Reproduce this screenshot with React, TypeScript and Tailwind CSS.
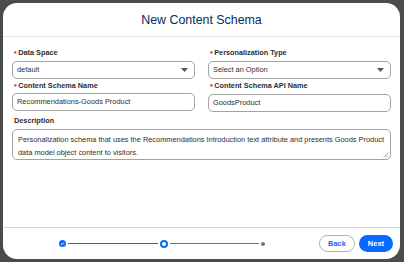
import React from "react";

const font = { fontFamily: '"Liberation Sans", Arial, sans-serif' };

const Label = ({ text, required }: { text: string; required?: boolean }) => (
  <div className="flex items-center h-[10px] pl-[2px] text-[7.3px] font-bold text-[#2e2e2e] leading-none">
    {required && <span className="text-[#ea001e] mr-[1.5px] text-[7px]">*</span>}
    <span>{text}</span>
  </div>
);

const Select = ({ value }: { value: string }) => (
  <div className="flex items-center justify-between h-[18px] rounded-[5px] border border-[#a3a3a3] bg-white pl-[4px] pr-[6px]">
    <span className="text-[7.4px] text-[#2e2e2e]">{value}</span>
    <svg width="7" height="4" viewBox="0 0 7 4">
      <path d="M0 0h7L3.5 4z" fill="#555" />
    </svg>
  </div>
);

const Input = ({ value }: { value: string }) => (
  <div className="flex items-center h-[18px] rounded-[5px] border border-[#a3a3a3] bg-white pl-[4px]">
    <span className="text-[7.4px] text-[#2e2e2e]">{value}</span>
  </div>
);

export default function App() {
  return (
    <div className="w-[404px] h-[262px] bg-[#4b4b4b] p-[3px] pr-[4px]" style={font}>
      <div className="flex flex-col h-[256px] bg-white rounded-[14px] overflow-hidden">
        <div className="flex items-center justify-center h-[34px] border-b-[1.5px] border-[#e5e5e5] shrink-0">
          <h1 className="text-[12.4px] text-[#032d60] leading-none mt-[1px]">New Content Schema</h1>
        </div>

        <div className="flex-1 px-[9px] pt-[11px]">
          <div className="grid grid-cols-2 gap-x-[13px]">
            <div className="flex flex-col">
              <Label text="Data Space" required />
              <div className="mt-[3px]">
                <Select value="default" />
              </div>
              <div className="mt-[2px]">
                <Label text="Content Schema Name" required />
              </div>
              <div className="mt-[2px]">
                <Input value="Recommendations-Goods Product" />
              </div>
            </div>
            <div className="flex flex-col">
              <Label text="Personalization Type" required />
              <div className="mt-[3px]">
                <Select value="Select an Option" />
              </div>
              <div className="mt-[2px]">
                <Label text="Content Schema API Name" required />
              </div>
              <div className="mt-[3px]">
                <Input value="GoodsProduct" />
              </div>
            </div>
          </div>
          <div className="mt-[4px]">
            <Label text="Description" />
          </div>
          <div className="relative mt-[3px] h-[31px] rounded-[5px] border border-[#a3a3a3] pl-[5px] pt-[3px] text-[7.4px] leading-[13px] text-[#2e2e2e]">
            Personalization schema that uses the Recommendations Introduction text attribute and presents Goods Product
            <br />
            data model object content to visitors.
            <svg className="absolute right-[1px] bottom-[1px]" width="6" height="6" viewBox="0 0 6 6">
              <path d="M5.5 0.5L0.5 5.5M5.5 3L3 5.5" stroke="#999" strokeWidth="0.8" />
            </svg>
          </div>
        </div>

        <div className="flex items-center h-[32px] border-t-[1.5px] border-[#d4d4d4] shrink-0 pl-[56px] pr-[7px]">
          <div className="flex items-center">
            <div className="flex items-center justify-center w-[7px] h-[7px] rounded-full bg-[#066afe]">
              <svg width="5" height="5" viewBox="0 0 5 5">
                <path d="M1 2.6L2.1 3.6L4 1.4" stroke="white" strokeWidth="0.9" fill="none" />
              </svg>
            </div>
            <div className="w-[90px] h-[1.2px] bg-[#066afe] mx-[2px]" />
            <div className="w-[8px] h-[8px] rounded-full border-[2px] border-[#066afe] bg-white" />
            <div className="w-[89px] h-[1px] bg-[#747474] mx-[2px]" />
            <div className="w-[4px] h-[4px] rounded-full bg-[#747474]" />
          </div>
          <div className="flex-1" />
          <div className="flex items-center gap-[4px]">
            <button className="w-[36px] h-[17px] rounded-full border border-[#aeaeae] bg-white text-[7.5px] font-bold text-[#066afe] leading-none">
              Back
            </button>
            <button className="w-[34px] h-[17px] rounded-full bg-[#066afe] text-[7.5px] font-bold text-white leading-none">
              Next
            </button>
          </div>
        </div>
      </div>
    </div>
  );
}
